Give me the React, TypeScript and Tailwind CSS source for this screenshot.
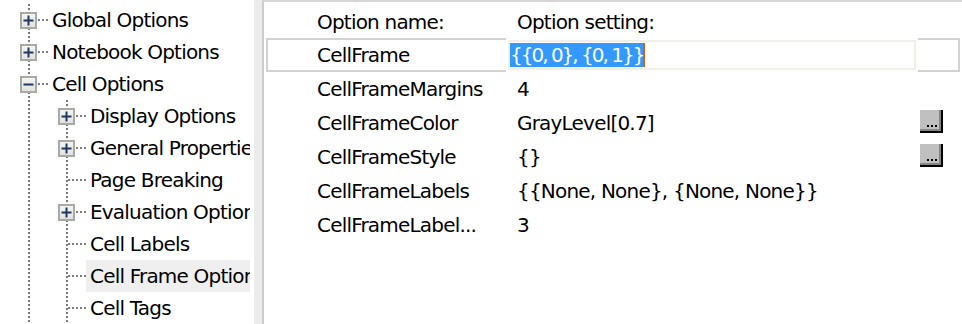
import React from "react";

type TreeItem = {
  label: string;
  level: 1 | 2;
  kind: "plus" | "minus" | "leaf";
  selected?: boolean;
};

const treeItems: TreeItem[] = [
  { label: "Global Options", level: 1, kind: "plus" },
  { label: "Notebook Options", level: 1, kind: "plus" },
  { label: "Cell Options", level: 1, kind: "minus" },
  { label: "Display Options", level: 2, kind: "plus" },
  { label: "General Properties", level: 2, kind: "plus" },
  { label: "Page Breaking", level: 2, kind: "leaf" },
  { label: "Evaluation Options", level: 2, kind: "plus" },
  { label: "Cell Labels", level: 2, kind: "leaf" },
  { label: "Cell Frame Options", level: 2, kind: "leaf", selected: true },
  { label: "Cell Tags", level: 2, kind: "leaf" },
];

const options = [
  { name: "CellFrame", value: "{{0, 0}, {0, 1}}", editing: true },
  { name: "CellFrameMargins", value: "4" },
  { name: "CellFrameColor", value: "GrayLevel[0.7]", button: true },
  { name: "CellFrameStyle", value: "{}", button: true },
  { name: "CellFrameLabels", value: "{{None, None}, {None, None}}" },
  { name: "CellFrameLabel...", value: "3" },
];

const dots = "#7a7a7a";

function ExpandBox({ x, open }: { x: number; open: boolean }) {
  const cx = x + 8.5;
  return (
    <g>
      <rect x={x + 1} y={9} width={15} height={15} fill="url(#boxfill)" stroke="#a9a9a9" strokeWidth={2} />
      <line x1={cx - 5} y1={16.5} x2={cx + 5} y2={16.5} stroke="#1f3766" strokeWidth={2} />
      {!open && <line x1={cx} y1={11.5} x2={cx} y2={21.5} stroke="#1f3766" strokeWidth={2} />}
    </g>
  );
}

function TreeRow({ item }: { item: TreeItem }) {
  return (
    <div className="flex h-8 items-center">
      <svg width={48} height={32} className="shrink-0">
        <defs>
          <linearGradient id="boxfill" x1="0" y1="0" x2="0" y2="1">
            <stop offset="0" stopColor="#f6f6f2" />
            <stop offset="1" stopColor="#e2e2dc" />
          </linearGradient>
        </defs>
        <line x1={29} y1={0} x2={29} y2={32} stroke={dots} strokeWidth={2} strokeDasharray="2 2" />
        {item.level === 1 && (
          <>
            <line x1={38} y1={16} x2={48} y2={16} stroke={dots} strokeWidth={2} strokeDasharray="2 2" />
            <ExpandBox x={20} open={item.kind === "minus"} />
          </>
        )}
      </svg>
      {item.level === 2 && (
        <svg width={38} height={32} className="shrink-0">
          <line x1={19} y1={0} x2={19} y2={32} stroke={dots} strokeWidth={2} strokeDasharray="2 2" />
          {item.kind === "leaf" ? (
            <line x1={20} y1={16} x2={38} y2={16} stroke={dots} strokeWidth={2} strokeDasharray="2 2" />
          ) : (
            <>
              <line x1={28} y1={16} x2={38} y2={16} stroke={dots} strokeWidth={2} strokeDasharray="2 2" />
              <ExpandBox x={10} open={false} />
            </>
          )}
        </svg>
      )}
      <span
        className={`flex h-8 items-center whitespace-nowrap px-1 ${item.selected ? "bg-[#efefef]" : ""}`}
      >
        {item.label}
      </span>
    </div>
  );
}

function DotsButton() {
  return (
    <div className="mt-[2px] ml-[2px] h-[23px] w-[23px] border-b-2 border-r-2 border-black">
      <div className="flex h-full w-full items-end justify-center gap-[2px] border-b-2 border-r-2 border-[#858585] bg-[#c0c0c0] pb-[2px] pl-[4px]">
        <span className="h-[2px] w-[2px] bg-black" />
        <span className="h-[2px] w-[2px] bg-black" />
        <span className="h-[2px] w-[2px] bg-black" />
      </div>
    </div>
  );
}

export default function App() {
  return (
    <div className="flex h-[324px] w-[962px] overflow-hidden bg-white font-['DejaVu_Sans',sans-serif] text-[20px] tracking-[-0.8px] text-black">
      <aside className="w-[254px] shrink-0 pr-1 pt-1">
        <div className="overflow-hidden">
          {treeItems.map((item) => (
            <TreeRow key={item.label} item={item} />
          ))}
        </div>
      </aside>

      <div className="w-2 shrink-0 bg-[#ececec]" />

      <section className="flex-1 border-l-2 border-t-2 border-l-[#cdcdcd] border-t-[#d6d6d6] pr-[2px] pl-[2px]">
        <div className="grid h-9 grid-cols-[51px_189px_412px_1fr] items-center pt-1">
          <span />
          <span>Option name:</span>
          <span className="pl-[11px]">Option setting:</span>
        </div>

        {options.map((opt) => (
          <div
            key={opt.name}
            className={`grid h-[34px] grid-cols-[49px_189px_412px_1fr] border-2 ${
              opt.editing ? "border-[#d2d2d2]" : "border-transparent"
            }`}
          >
            <span />
            <span className="flex items-center whitespace-nowrap">{opt.name}</span>
            {opt.editing ? (
              <div className="-my-[2px] bg-white p-[2px]">
                <div className="flex h-full items-center border-2 border-[#f0f0e9]">
                  <span className="border-r-2 border-[#d0620f] bg-[#3399ff] leading-6 tracking-[-2px] text-white">
                    {opt.value}
                  </span>
                </div>
              </div>
            ) : (
              <span className="flex items-center whitespace-nowrap pl-[11px]">{opt.value}</span>
            )}
            <div>{opt.button && <DotsButton />}</div>
          </div>
        ))}
      </section>
    </div>
  );
}
